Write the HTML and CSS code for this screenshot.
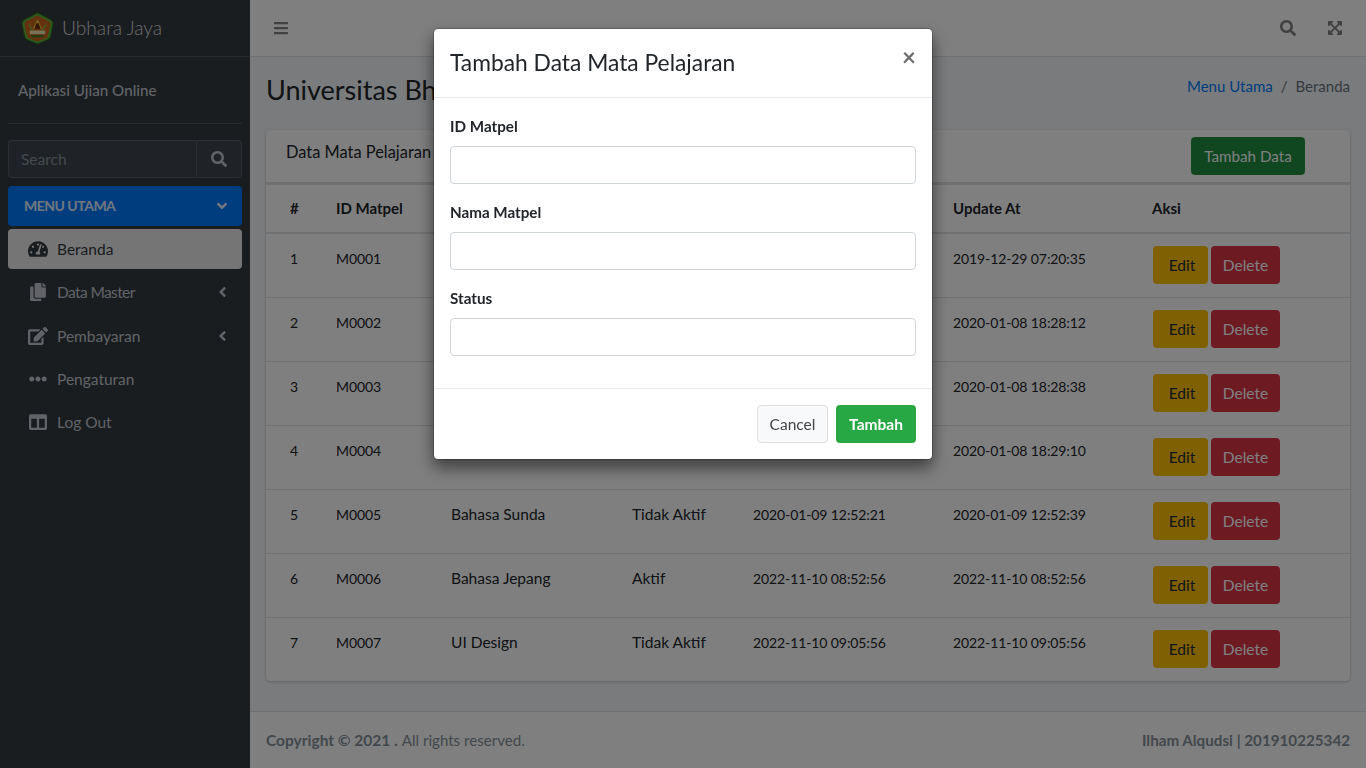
FILE: index.html
```html
<!DOCTYPE html>
<html lang="id">
<head>
<meta charset="utf-8">
<title>Ubhara Jaya</title>
<link rel="stylesheet" href="styles.css">
</head>
<body>
<svg class="defs" width="0" height="0" aria-hidden="true">
<symbol id="i-search" viewBox="0 0 512 512"><path d="M505 442.7L405.3 343c-4.5-4.5-10.6-7-17-7H372c27.6-35.3 44-79.7 44-128C416 93.1 322.9 0 208 0S0 93.1 0 208s93.1 208 208 208c48.3 0 92.7-16.4 128-44v16.3c0 6.4 2.5 12.5 7 17l99.7 99.7c9.4 9.4 24.6 9.4 33.9 0l28.3-28.3c9.4-9.4 9.4-24.6.1-34zM208 336c-70.7 0-128-57.2-128-128 0-70.7 57.2-128 128-128 70.7 0 128 57.2 128 128 0 70.7-57.2 128-128 128z"/></symbol>
<symbol id="i-bars" viewBox="0 0 448 512"><path d="M16 132h416c8.837 0 16-7.163 16-16V76c0-8.837-7.163-16-16-16H16C7.163 60 0 67.163 0 76v40c0 8.837 7.163 16 16 16zm0 160h416c8.837 0 16-7.163 16-16v-40c0-8.837-7.163-16-16-16H16c-8.837 0-16 7.163-16 16v40c0 8.837 7.163 16 16 16zm0 160h416c8.837 0 16-7.163 16-16v-40c0-8.837-7.163-16-16-16H16c-8.837 0-16 7.163-16 16v40c0 8.837 7.163 16 16 16z"/></symbol>
<symbol id="i-left" viewBox="0 0 256 512"><path d="M31.7 239l136-136c9.4-9.4 24.6-9.4 33.9 0l22.6 22.6c9.4 9.4 9.4 24.6 0 33.9L127.9 256l96.4 96.4c9.4 9.4 9.4 24.6 0 33.9L201.7 409c-9.4 9.4-24.6 9.4-33.9 0l-136-136c-9.5-9.4-9.5-24.6-.1-34z"/></symbol>
<symbol id="i-down" viewBox="0 0 320 512"><path d="M143 352.3L7 216.3c-9.4-9.4-9.4-24.6 0-33.9l22.6-22.6c9.4-9.4 24.6-9.4 33.9 0l96.4 96.4 96.4-96.4c9.4-9.4 24.6-9.4 33.9 0l22.6 22.6c9.4 9.4 9.4 24.6 0 33.9l-136 136c-9.2 9.4-24.4 9.4-33.8 0z"/></symbol>
<symbol id="i-dots" viewBox="0 0 512 512"><path d="M328 256c0 39.8-32.2 72-72 72s-72-32.2-72-72 32.2-72 72-72 72 32.2 72 72zm104-72c-39.8 0-72 32.2-72 72s32.2 72 72 72 72-32.2 72-72-32.2-72-72-72zm-352 0c-39.8 0-72 32.2-72 72s32.2 72 72 72 72-32.2 72-72-32.2-72-72-72z"/></symbol>
<symbol id="i-copy" viewBox="0 0 448 512"><path d="M320 448v40c0 13.255-10.745 24-24 24H24c-13.255 0-24-10.745-24-24V120c0-13.255 10.745-24 24-24h72v296c0 30.879 25.121 56 56 56h168zm0-344V0H152c-13.255 0-24 10.745-24 24v368c0 13.255 10.745 24 24 24h272c13.255 0 24-10.745 24-24V128H344c-13.2 0-24-10.8-24-24zm120.971-31.029L375.029 7.029A24 24 0 0 0 358.059 0H352v96h96v-6.059a24 24 0 0 0-7.029-16.97z"/></symbol>
<symbol id="i-edit" viewBox="0 0 576 512"><path d="M402.6 83.2l90.2 90.2c3.8 3.8 3.8 10 0 13.8L274.4 405.6l-92.8 10.3c-12.4 1.4-22.9-9.1-21.5-21.5l10.3-92.8L388.8 83.2c3.8-3.8 10-3.8 13.8 0zm162-22.9l-48.8-48.8c-15.2-15.2-39.9-15.2-55.2 0l-35.4 35.4c-3.8 3.8-3.8 10 0 13.8l90.2 90.2c3.8 3.8 10 3.8 13.8 0l35.4-35.4c15.2-15.3 15.2-40 0-55.2zM384 346.2V448H64V128h229.8c3.2 0 6.2-1.3 8.5-3.5l40-40c7.6-7.6 2.2-20.5-8.5-20.5H48C21.5 64 0 85.5 0 112v352c0 26.5 21.5 48 48 48h352c26.5 0 48-21.5 48-48V306.2c0-10.7-12.9-16-20.5-8.5l-40 40c-2.2 2.3-3.5 5.3-3.5 8.5z"/></symbol>
<symbol id="i-cols" viewBox="0 0 512 512"><path d="M464 32H48C21.49 32 0 53.49 0 80v352c0 26.51 21.49 48 48 48h416c26.51 0 48-21.49 48-48V80c0-26.51-21.49-48-48-48zM224 416H64V160h160v256zm224 0H288V160h160v256z"/></symbol>
<symbol id="i-gauge" viewBox="0 0 576 512"><path d="M288 32C128.94 32 0 160.94 0 320c0 52.8 14.25 102.26 39.06 144.8 5.61 9.62 16.3 15.2 27.44 15.2h443c11.14 0 21.83-5.58 27.44-15.2C561.75 422.26 576 372.8 576 320c0-159.06-128.94-288-288-288zm0 64c14.71 0 26.58 10.13 30.32 23.65-1.11 2.26-2.64 4.23-3.45 6.67l-9.22 27.67c-5.13 3.49-10.97 6.01-17.64 6.01-17.67 0-32-14.33-32-32S270.33 96 288 96zM96 384c-17.67 0-32-14.33-32-32s14.33-32 32-32 32 14.33 32 32-14.33 32-32 32zm48-160c-17.67 0-32-14.33-32-32s14.33-32 32-32 32 14.33 32 32-14.33 32-32 32zm246.77-72.41l-61.33 184C343.13 347.33 352 364.54 352 384c0 11.72-3.38 22.55-8.88 32H232.88c-5.5-9.45-8.88-20.28-8.88-32 0-33.94 26.5-61.43 59.9-63.59l61.34-184.01c4.17-12.56 17.73-19.45 30.36-15.17 12.57 4.19 19.35 17.79 15.17 30.36zm14.66 57.2l15.52-46.55c3.47-1.29 7.13-2.23 11.05-2.23 17.67 0 32 14.33 32 32s-14.33 32-32 32c-11.38-.01-20.89-6.28-26.57-15.22zM480 384c-17.67 0-32-14.33-32-32s14.33-32 32-32 32 14.33 32 32-14.33 32-32 32z"/></symbol>
<symbol id="i-expand" viewBox="0 0 448 512"><path d="M448 344v112a23.94 23.94 0 0 1-24 24H312c-21.39 0-32.09-25.9-17-41l36.2-36.2L224 295.6 116.77 402.9 153 439c15.09 15.1 4.39 41-17 41H24a23.94 23.94 0 0 1-24-24V344c0-21.4 25.89-32.1 41-17l36.19 36.2L184.46 256 77.18 148.7 41 185c-15.1 15.1-41 4.4-41-17V56a23.94 23.94 0 0 1 24-24h112c21.39 0 32.09 25.9 17 41l-36.2 36.2L224 216.4l107.23-107.3L295 73c-15.09-15.1-4.39-41 17-41h112a23.94 23.94 0 0 1 24 24v112c0 21.4-25.89 32.1-41 17l-36.19-36.2L263.54 256l107.28 107.3L407 327.1c15.1-15.2 41-4.5 41 16.9z"/></symbol>
</svg>

<div class="app">
  <aside class="sidebar">
    <a class="brand">
      <svg class="logo" viewBox="0 0 32 32">
        <path d="M16 .8 29 7.500Q31.500 9 31 12L28.500 24Q28 26 26 27L16 31 6 27Q4 26 3.500 24L1 12Q.5 9 3 7.500Z" fill="#5fb33a" stroke="#2b6a1c" stroke-width="1"/>
        <path d="M16 3.500 27.500 9.500Q29 10.500 28.500 12.500L26 23.500Q25.700 24.800 24.500 25.300L16 28.500 7.500 25.300Q6.300 24.800 6 23.500L3.500 12.500Q3 10.500 4.500 9.500Z" fill="#c9641e"/>
        <path d="M16 6.500 20.500 16.500H11.500Z" fill="#ecc63c"/>
        <path d="M14.800 11h2.400l1.700 5.500h-5.800Z" fill="#6d2c0c"/>
        <path d="M8 12c1 3 2 5 4 6M24 12c-1 3-2 5-4 6" fill="none" stroke="#7fc04a" stroke-width="1.200"/>
        <rect x="8.500" y="18" width="15" height="3.500" fill="#efe6b0"/>
        <rect x="10" y="22.500" width="12" height="2" fill="#3f7a22"/>
      </svg>
      <span class="brand-text">Ubhara Jaya</span>
    </a>
    <div class="user-panel">Aplikasi Ujian Online</div>
    <div class="side-search">
      <span class="side-search-input">Search</span>
      <span class="side-search-btn"><svg class="ic ic-16"><use href="#i-search"/></svg></span>
    </div>
    <nav class="side-nav">
      <a class="nav-head"><span>MENU UTAMA</span><svg class="ic-caret-d"><use href="#i-down"/></svg></a>
      <a class="nav-item active"><svg class="nav-ic"><use href="#i-gauge"/></svg><span>Beranda</span></a>
      <a class="nav-item"><svg class="nav-ic"><use href="#i-copy"/></svg><span class="tight">Data Master</span><svg class="ic-caret-l"><use href="#i-left"/></svg></a>
      <a class="nav-item"><svg class="nav-ic"><use href="#i-edit"/></svg><span>Pembayaran</span><svg class="ic-caret-l"><use href="#i-left"/></svg></a>
      <a class="nav-item"><svg class="nav-ic"><use href="#i-dots"/></svg><span>Pengaturan</span></a>
      <a class="nav-item"><svg class="nav-ic"><use href="#i-cols"/></svg><span>Log Out</span></a>
    </nav>
  </aside>

  <div class="main">
    <header class="topbar">
      <svg class="ic ic-bars"><use href="#i-bars"/></svg>
      <div class="topbar-right">
        <svg class="ic ic-16"><use href="#i-search"/></svg>
        <svg class="ic ic-16"><use href="#i-expand"/></svg>
      </div>
    </header>

    <div class="page-head">
      <h1>Universitas Bhayangkara Jakarta Raya</h1>
      <div class="crumbs"><a>Menu Utama</a><span class="sep">/</span><span>Beranda</span></div>
    </div>

    <section class="card">
      <div class="card-head">
        <span class="card-title">Data Mata Pelajaran</span>
        <button class="btn btn-add">Tambah Data</button>
      </div>
      <table class="tbl">
        <colgroup><col class="c1"><col class="c2"><col class="c3"><col class="c4"><col class="c5"><col class="c6"><col class="c7"></colgroup>
        <thead><tr><th>#</th><th>ID Matpel</th><th>Nama Matpel</th><th>Status</th><th>Create At</th><th>Update At</th><th>Aksi</th></tr></thead>
        <tbody>
          <tr><td class="num">1</td><td class="num">M0001</td><td>Bahasa Indonesia</td><td>Aktif</td><td class="num">2019-12-29 07:20:35</td><td class="num">2019-12-29 07:20:35</td><td><button class="btn btn-edit">Edit</button><button class="btn btn-del">Delete</button></td></tr>
          <tr><td class="num">2</td><td class="num">M0002</td><td>Matematika</td><td>Aktif</td><td class="num">2020-01-08 18:28:12</td><td class="num">2020-01-08 18:28:12</td><td><button class="btn btn-edit">Edit</button><button class="btn btn-del">Delete</button></td></tr>
          <tr><td class="num">3</td><td class="num">M0003</td><td>Bahasa Inggris</td><td>Aktif</td><td class="num">2020-01-08 18:28:38</td><td class="num">2020-01-08 18:28:38</td><td><button class="btn btn-edit">Edit</button><button class="btn btn-del">Delete</button></td></tr>
          <tr><td class="num">4</td><td class="num">M0004</td><td>Bahasa Jawa</td><td>Aktif</td><td class="num">2020-01-08 18:29:10</td><td class="num">2020-01-08 18:29:10</td><td><button class="btn btn-edit">Edit</button><button class="btn btn-del">Delete</button></td></tr>
          <tr><td class="num">5</td><td class="num">M0005</td><td>Bahasa Sunda</td><td>Tidak Aktif</td><td class="num">2020-01-09 12:52:21</td><td class="num">2020-01-09 12:52:39</td><td><button class="btn btn-edit">Edit</button><button class="btn btn-del">Delete</button></td></tr>
          <tr><td class="num">6</td><td class="num">M0006</td><td>Bahasa Jepang</td><td>Aktif</td><td class="num">2022-11-10 08:52:56</td><td class="num">2022-11-10 08:52:56</td><td><button class="btn btn-edit">Edit</button><button class="btn btn-del">Delete</button></td></tr>
          <tr><td class="num">7</td><td class="num">M0007</td><td>UI Design</td><td>Tidak Aktif</td><td class="num">2022-11-10 09:05:56</td><td class="num">2022-11-10 09:05:56</td><td><button class="btn btn-edit">Edit</button><button class="btn btn-del">Delete</button></td></tr>
        </tbody>
      </table>
    </section>

    <footer class="foot">
      <span><b>Copyright © 2021 .</b> <span class="foot-note">All rights reserved.</span></span>
      <b class="foot-id">Ilham Alqudsi | 201910225342</b>
    </footer>
  </div>
</div>

<div class="backdrop"></div>
<div class="modal-wrap">
  <div class="modal">
    <div class="modal-head">
      <h2>Tambah Data Mata Pelajaran</h2>
      <span class="close">×</span>
    </div>
    <div class="modal-body">
      <div class="field"><label>ID Matpel</label><input class="input" type="text"></div>
      <div class="field"><label>Nama Matpel</label><input class="input" type="text"></div>
      <div class="field"><label>Status</label><input class="input" type="text"></div>
    </div>
    <div class="modal-foot">
      <button class="btn btn-cancel">Cancel</button>
      <button class="btn btn-save">Tambah</button>
    </div>
  </div>
</div>
</body>
</html>
```
FILE: styles.css
```css
* { box-sizing: border-box; }
html, body { margin: 0; height: 100%; overflow: hidden; }
body {
  font-family: "Lato", "Liberation Sans", sans-serif;
  font-size: 15.5px;
  line-height: 24px;
  color: #212529;
  background: #f4f6f9;
}
.defs { position: absolute; }
.ic { fill: currentColor; display: block; }
.ic-16 { width: 16px; height: 16px; }
.ic-bars { width: 14px; height: 16px; color: #808080; }

.app { display: flex; height: 768px; }

/* sidebar */
.sidebar { width: 250px; flex: none; background: #343a40; color: #c2c7d0; padding: 0 8px; }
.brand { display: flex; align-items: center; height: 57px; margin: 0 -8px; padding-left: 21px; border-bottom: 1px solid #4b545c; }
.logo { width: 33px; height: 33px; margin-right: 8px; }
.brand-text { font-size: 19.2px; font-weight: 300; color: rgba(255,255,255,.8); }
.user-panel { height: 67px; margin: 0 0 16px; padding: 21px 10px 0; font-size: 15.2px; font-weight: 500; border-bottom: 1px solid #4f5962; }
.side-search { display: flex; height: 38px; margin-bottom: 8px; }
.side-search-input { flex: 1; padding: 6px 12px; background: #3f474e; border: 1px solid #56606a; border-right: 0; border-radius: 4px 0 0 4px; color: #8b939b; }
.side-search-btn { width: 46px; display: flex; align-items: center; justify-content: center; background: #3f474e; border: 1px solid #56606a; border-radius: 0 4px 4px 0; color: #c2c7d0; }
.side-nav { display: flex; flex-direction: column; }
.nav-head { height: 40px; margin-bottom: 3px; display: flex; align-items: center; justify-content: space-between; padding: 0 14px 0 16px; border-radius: 4px; background: #007bff; color: rgba(255,255,255,.9); font-size: 14px; letter-spacing: -.5px; font-weight: 700; }
.ic-caret-d { width: 12px; height: 16px; fill: currentColor; }
.ic-caret-l { width: 9px; height: 16px; margin-left: auto; margin-right: 5px; fill: currentColor; }
.nav-item { height: 40px; margin-bottom: 3.3px; display: flex; align-items: center; padding: 0 10px 0 20px; border-radius: 4px; }
.nav-ic { width: 20px; height: 18px; margin-right: 9px; fill: currentColor; }
.nav-item.active { background: rgba(255,255,255,.9); color: #343a40; }
.tight { letter-spacing: -.6px; }

/* main */
.main { flex: 1; display: flex; flex-direction: column; min-width: 0; }
.topbar { height: 57px; flex: none; display: flex; align-items: center; justify-content: space-between; padding: 0 23px 0 24px; background: #fff; border-bottom: 1px solid #dee2e6; }
.topbar-right { display: flex; gap: 31px; color: #808080; }
.page-head { height: 73px; flex: none; display: flex; justify-content: space-between; padding: 0 16px; }
.page-head h1 { margin: 23px 0 0; font-size: 27px; line-height: 20px; height: 20px; font-weight: 400; white-space: nowrap; }
.crumbs { margin-top: 17px; display: flex; color: #6c757d; font-size: 15px; }
.crumbs a { color: #007bff; }
.sep { padding: 0 8px; }

.card { margin: 0 16px; background: #fff; border-radius: 4px; box-shadow: 0 0 1px rgba(0,0,0,.125), 0 1px 3px rgba(0,0,0,.2); height: 551px; flex: none; }
.card-head { height: 53px; display: flex; justify-content: space-between; align-items: flex-start; padding: 7px 45px 0 20px; border-bottom: 1px solid rgba(0,0,0,.125); }
.card-title { font-size: 16.4px; line-height: 30px; }
.btn { height: 38px; padding: 0 13px; border: 1px solid transparent; border-radius: 4px; font: inherit; cursor: pointer; }
.btn-add { background: #218f40; color: #fff; width: 114px; padding: 0; font-size: 15.2px; }

.tbl { width: 100%; border-collapse: collapse; table-layout: fixed; }
.c1 { width: 58px; } .c2 { width: 115px; } .c3 { width: 181px; } .c4 { width: 121px; } .c5 { width: 200px; } .c6 { width: 199px; }
.tbl th, .tbl td { text-align: left; vertical-align: top; padding: 12px; border-top: 1px solid #dee2e6; }
.tbl th { height: 49px; padding-top: 11px; padding-bottom: 11px; border-top: 2px solid #dee2e6; border-bottom: 2px solid #dee2e6; font-weight: 700; font-size: 15px; }
.tbl td { height: 64px; }
.tbl td.num { font-size: 14px; letter-spacing: -.1px; padding-top: 13px; }
.tbl th:first-child, .tbl td:first-child { padding-left: 24px; }
.tbl td:last-child { white-space: nowrap; }
.btn-edit { background: #ffc107; color: #1f2d3d; width: 55px; margin: 0 3px 0 1px; padding: 0 0 0 3px; }
.btn-del { background: #dc3545; color: #fff; width: 69px; padding: 0; }

.foot { margin-top: auto; height: 57px; display: flex; align-items: center; justify-content: space-between; padding: 0 16px; background: #fff; border-top: 1px solid #dee2e6; color: #869099; }
.foot-note { font-size: 15.1px; }
.foot-id { font-size: 15.2px; }

/* modal */
.backdrop { position: fixed; inset: 0; background: rgba(0,0,0,.5); }
.modal-wrap { position: fixed; top: 28px; left: 433px; width: 500px; }
.modal { background: #fff; background-clip: padding-box; border: 1px solid rgba(0,0,0,.2); border-radius: 5px; box-shadow: 0 8px 16px rgba(0,0,0,.5); }
.modal-head { height: 69px; display: flex; justify-content: space-between; align-items: flex-start; padding: 18px 16px 0; border-bottom: 1px solid #e9ecef; }
.modal-head h2 { margin: 0; font-size: 22.8px; line-height: 30px; font-weight: 400; }
.close { font-size: 24px; font-weight: 700; line-height: 20px; color: #6e6e6e; }
.modal-body { padding: 16px; height: 290px; }
.field { margin-bottom: 16px; }
.field label { display: block; font-weight: 700; margin-bottom: 8px; height: 24px; font-size: 15.2px; }
.input { display: block; width: 100%; height: 38px; border: 1px solid #ced4da; border-radius: 4px; background: #fff; }
.modal-foot { height: 71px; display: flex; justify-content: flex-end; align-items: center; gap: 8px; padding: 0 16px; border-top: 1px solid #e9ecef; }
.btn-cancel { background: #f8f9fa; border-color: #ddd; color: #444; width: 71px; padding: 0; }
.btn-save { background: #28a745; color: #fff; font-weight: 700; width: 80px; padding: 0; }
```
